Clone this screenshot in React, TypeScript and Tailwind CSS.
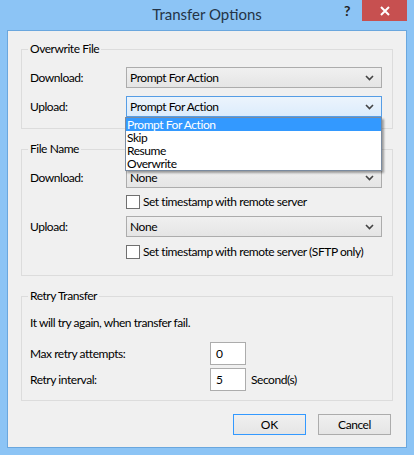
import React from "react";

const font = { fontFamily: 'Lato, "Noto Sans", sans-serif' };
const t = "text-[12px] tracking-[-0.45px]";

function Chevron() {
  return (
    <svg width="9" height="6" viewBox="0 0 9 6" className="block">
      <path d="M1 1 L4.5 4.5 L8 1" fill="none" stroke="#444" strokeWidth="1.6" />
    </svg>
  );
}

function Combo({ value, focused }: { value: string; focused?: boolean }) {
  return (
    <div
      className={
        "flex h-[21px] w-[256px] items-center justify-between border pl-[3px] pr-[7px] " +
        (focused
          ? "border-[#569de5] bg-gradient-to-b from-[#ecf4fc] to-[#dcecfc]"
          : "border-[#acacac] bg-gradient-to-b from-[#f0f0f0] to-[#e5e5e5]")
      }
    >
      <span className="whitespace-nowrap text-[12px] leading-none tracking-[-0.45px] text-black">{value}</span>
      <Chevron />
    </div>
  );
}

function Check({ label }: { label: string }) {
  return (
    <div className="flex h-[16px] items-center gap-[3px] pl-[96px]">
      <div className="h-[14px] w-[14px] shrink-0 border border-[#707070] bg-white" />
      <span className="whitespace-nowrap text-[12px] leading-none tracking-[-0.45px]">{label}</span>
    </div>
  );
}

function Row({ label, children }: { label: string; children: React.ReactNode }) {
  return (
    <div className="flex items-center">
      <span className="w-[96px] whitespace-nowrap text-[12px] leading-none tracking-[-0.45px]">{label}</span>
      {children}
    </div>
  );
}

function Group({ title, children, className }: { title: string; children: React.ReactNode; className?: string }) {
  return (
    <fieldset className={"mx-[13px] border border-[#dcdcdc] " + (className ?? "")}>
      <legend className="ml-[6px] px-[2px] text-[12px] leading-[16px] tracking-[-0.45px]">{title}</legend>
      {children}
    </fieldset>
  );
}

export default function App() {
  void t;
  return (
    <div className="h-[455px] w-[414px] bg-[#8cc4f5] text-[#000]" style={font}>
      <div className="relative flex h-[30px] items-start">
        <div className="flex h-[30px] w-full items-center justify-center pb-[1px] text-[15px] text-[#243447]">
          Transfer Options
        </div>
        <div className="absolute left-[344px] top-[4px] text-[14px] font-bold leading-none text-[#222]">?</div>
        <div className="absolute left-[362px] top-0 flex h-[21px] w-[45px] items-center justify-center bg-[#c75050]">
          <svg width="10" height="10" viewBox="0 0 10 10">
            <path d="M1 1 L9 9 M9 1 L1 9" stroke="white" strokeWidth="2" />
          </svg>
        </div>
      </div>
      <div className="relative mx-[7px] flex h-[418px] flex-col border border-[#6aa7de] bg-[#f0f0f0] pt-[10px]">
        <Group title="Overwrite File">
          <div className="flex flex-col gap-[8px] pb-[11px] pl-[8px] pt-[10px]">
            <Row label="Download:">
              <Combo value="Prompt For Action" />
            </Row>
            <Row label="Upload:">
              <Combo value="Prompt For Action" focused />
            </Row>
          </div>
        </Group>

        <Group title="File Name" className="mt-[12px]">
          <div className="flex flex-col pb-[15px] pl-[8px] pt-[10px]">
            <Row label="Download:">
              <Combo value="None" />
            </Row>
            <div className="mt-[6px]">
              <Check label="Set timestamp with remote server" />
            </div>
            <div className="mt-[6px]">
              <Row label="Upload:">
                <Combo value="None" />
              </Row>
            </div>
            <div className="mt-[7px]">
              <Check label="Set timestamp with remote server (SFTP only)" />
            </div>
          </div>
        </Group>

        <Group title="Retry Transfer" className="mt-[12px]">
          <div className="flex flex-col pb-[9px] pl-[8px] pt-[13px]">
            <div className="text-[12px] leading-none tracking-[-0.45px]">It will try again, when transfer fail.</div>
            <div className="mt-[13px] flex flex-col gap-[3px]">
              <div className="flex items-center">
                <span className="w-[180px] text-[12px] leading-none tracking-[-0.45px]">Max retry attempts:</span>
                <div className="flex h-[23px] w-[36px] items-center border border-[#acacac] bg-white pl-[5px] text-[12px]">0</div>
              </div>
              <div className="flex items-center">
                <span className="w-[180px] text-[12px] leading-none tracking-[-0.45px]">Retry interval:</span>
                <div className="flex h-[23px] w-[36px] items-center border border-[#acacac] bg-white pl-[5px] text-[12px]">5</div>
                <span className="ml-[5px] text-[12px] leading-none tracking-[-0.45px]">Second(s)</span>
              </div>
            </div>
          </div>
        </Group>

        <div className="mt-auto flex justify-end gap-[12px] pb-[12px] pr-[15px]">
          <div className="flex h-[21px] w-[73px] items-center justify-center border border-[#3399ff] bg-gradient-to-b from-[#f0f0f0] to-[#e5e5e5] text-[12px]">
            OK
          </div>
          <div className="flex h-[21px] w-[73px] items-center justify-center border border-[#acacac] bg-gradient-to-b from-[#f0f0f0] to-[#e5e5e5] text-[12px] tracking-[-0.45px]">
            Cancel
          </div>
        </div>

        <div className="absolute left-[117px] top-[86px] w-[257px] border border-[#7a8ba0] bg-white text-[12px] leading-[13px] tracking-[-0.45px] shadow-[2px_2px_2px_rgba(0,0,0,0.35)]">
          <div className="bg-[#3399ff] pl-[1px] text-white">Prompt For Action</div>
          <div className="pl-[1px]">Skip</div>
          <div className="pl-[1px]">Resume</div>
          <div className="pl-[1px]">Overwrite</div>
        </div>
      </div>
    </div>
  );
}
